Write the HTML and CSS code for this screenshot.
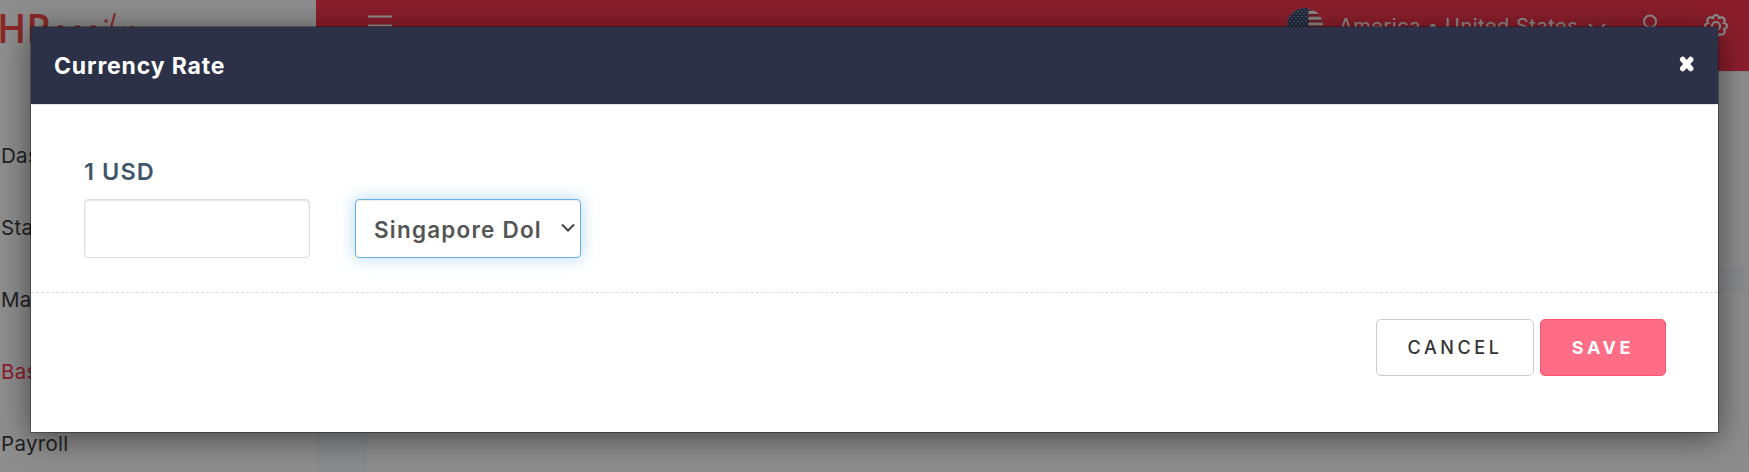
FILE: index.html
```
<!DOCTYPE html>
<html lang="en">
<head>
	<meta charset="UTF-8">
	<title>Currency Rate</title>
	<link rel="stylesheet" href="styles.css">
</head>
<body>
<div class="page">
	<div class="sidebar">
		<div class="logo">
			<b>HR</b>
			<svg width="80" height="40" viewBox="0 0 80 40"><path d="M9 19Q12 16 15 18M26 19Q29 16 32 18M41 19Q45 16 48 18M55 22L57 18M67 4Q64 14 62 24M75 19L76 17.500M83 18L84 17"/><circle cx="58" cy="12" r="1.700"/></svg>
		</div>
		<ul class="menu">
			<li>Dashboard</li>
			<li>Staff</li>
			<li>Manage</li>
			<li class="active">Basic</li>
			<li>Payroll</li>
		</ul>
	</div>
	<div class="main">
		<div class="topbar">
			<svg class="bars" width="24" height="22" viewBox="0 0 24 22"><path d="M0 1.5h24M0 10.5h24M0 19.5h24"/></svg>
			<svg class="flag" width="36" height="36" viewBox="0 0 36 36">
				<defs>
					<clipPath id="round"><circle cx="18" cy="18" r="18"/></clipPath>
					<pattern id="stars" width="4" height="5" patternUnits="userSpaceOnUse"><rect width="4" height="5" fill="#34466c"/><circle cx="1" cy="1" r=".7" fill="#d5dbe8"/><circle cx="3" cy="3.5" r=".7" fill="#d5dbe8"/></pattern>
				</defs>
				<g clip-path="url(#round)">
					<rect width="36" height="36" fill="#f8f0ef"/>
					<path d="M0 1.4h36M0 7.4h36M0 13.2h36M0 19h36M0 24.8h36M0 30.6h36" stroke="#c53445" stroke-width="2.8"/>
					<rect width="21.5" height="19" fill="url(#stars)"/>
				</g>
			</svg>
			<span class="country">America • United States</span>
			<svg class="down" width="18" height="12" viewBox="0 0 18 12"><path d="M1 2l8 8 8-8"/></svg>
			<svg class="user" width="24" height="28" viewBox="0 0 24 28"><circle cx="12" cy="7.500" r="6"/><path d="M2 27q0-10 10-10t10 10"/></svg>
			<svg class="gear" width="24" height="24" viewBox="0 0 24 24"><circle cx="12" cy="12" r="4"/><path d="M9 4C10 0 14 0 15 4C19 2 22 5 20 9C24 10 24 14 20 15C22 19 19 22 15 20C14 24 10 24 9 20C5 22 2 19 4 15C0 14 0 10 4 9C2 5 5 2 9 4Z"/></svg>
		</div>
		<div class="content">
			<div class="card card-top"></div>
			<div class="card"></div>
		</div>
	</div>
</div>

<div class="backdrop">
	<div class="modal">
		<div class="modal-header">
			<h4>Currency Rate</h4>
			<svg class="close" width="16" height="18" viewBox="0 0 16 18"><path d="M3.700 4.500l8 9M11.700 4.500l-8 9"/></svg>
		</div>
		<div class="modal-body">
			<div class="form-group">
				<label for="rate">1 USD</label>
				<input type="text" id="rate" class="form-control">
			</div>
			<div class="form-group select">
				<select class="form-control focus">
					<option>Singapore Dollar</option>
				</select>
				<svg class="arrow" width="14" height="10" viewBox="0 0 14 10"><path d="M1 1.500l6 6 6-6"/></svg>
			</div>
		</div>
		<div class="modal-footer">
			<button class="btn btn-default">CANCEL</button>
			<button class="btn btn-save">SAVE</button>
		</div>
	</div>
</div>
</body>
</html>
```

FILE: styles.css
```
*{box-sizing:border-box;}
body{margin:0; height:472px; overflow:hidden; font-family:Inter,"Liberation Sans",sans-serif;}
ul{margin:0; padding:0; list-style:none;}
svg{display:block; flex:none;}

.page{display:flex; height:472px; overflow:hidden;}
.sidebar{flex:none; width:316px; background:#fdfdff; box-shadow:0 0 14px rgba(0,0,0,.08);}
.logo{display:flex; height:120px; color:#f84848;}
.logo b{font:600 39px/46px "Open Sans",sans-serif; width:51px; padding-top:5px; margin-left:-3px; letter-spacing:0;}
.logo svg{margin-top:9px; fill:none; stroke:#f84848; stroke-width:2; overflow:visible;}
.logo circle{fill:#f84848; stroke:none;}
.menu li{height:70px; margin-bottom:2px; line-height:72px; padding-left:1px; font-size:20.5px; letter-spacing:.3px; color:#3c3c40;}
.menu .active{color:#f8364f;}
.main{flex:1; display:flex; flex-direction:column;}
.topbar{flex:none; display:flex; height:71px; padding:8px 20px 0 52px; background:#f8364f; color:#fff;}
.topbar svg{fill:none; stroke:#fff; stroke-width:2;}
.bars{margin-top:7px;}
.topbar .flag{margin-left:895px; stroke:none;}
.country{margin-left:16px; width:236px; line-height:36px; font-size:20px; letter-spacing:.5px; white-space:nowrap;}
.down{margin:14px 0 0 13px;}
.user{margin:6px 0 0 32px;}
.topbar .gear{margin:6px 0 0 42px; stroke-width:2.2;}
.content{flex:1; display:flex; flex-direction:column; background:#f7f8fc; padding-left:49px;}
.card{flex:1; background:#fbfbfb; border:1px solid #eeeef2; border-bottom:0;}
.card-top{flex:none; height:198px; margin-bottom:20px; border-bottom:1px solid #eeeef2;}

.backdrop{position:absolute; top:0; left:0; width:1749px; height:472px; padding:26px 30px; background:rgba(0,0,0,.44);}
.modal{height:407px; background:#fff; background-clip:padding-box; border:1px solid rgba(0,0,0,.3); box-shadow:0 5px 30px rgba(0,0,0,.5);}
.modal-header{display:flex; justify-content:space-between; height:78px; padding:0 23px; background:#2c3147; border-bottom:1px solid #e5e5e5; color:#fff;}
.modal-header h4{margin:0; font-size:23px; line-height:78px; font-weight:700; letter-spacing:.85px;}
.close{margin-top:28px; fill:none; stroke:#fff; stroke-width:5.5; stroke-linecap:round;}
.modal-body{display:flex; align-items:flex-end; gap:45px; height:188px; padding:0 53px 34px; border-bottom:1px dashed #ddd;}
.form-group label{display:block; margin-bottom:12px; font-size:23.5px; line-height:30px; font-weight:600; color:#3f566d; letter-spacing:1.1px;}
.form-control{display:block; width:226px; height:59px; padding:6px 16px; border:1px solid #ddd; border-radius:4px; background:#fff; box-shadow:inset 0 1px 2px rgba(0,0,0,.12); font:600 22.5px Inter,sans-serif; letter-spacing:1.2px; color:#555;}
.focus{border-color:#66afe9; box-shadow:inset 0 1px 1px rgba(0,0,0,.075),0 0 16px rgba(102,175,233,.5);}
.select{position:relative;}
.select select{appearance:none; padding:8px 37px 6px 18px; outline:0;}
.arrow{position:absolute; right:6px; top:24px; fill:none; stroke:#444; stroke-width:2;}
.modal-footer{display:flex; justify-content:flex-end; gap:6px; padding:26px 52px;}
.btn{height:57px; padding:0; border-radius:5px; font:500 18px Inter,sans-serif; letter-spacing:3.6px;}
.btn-default{width:158px; background:#fff; border:1px solid #ccc; color:#333;}
.btn-save{width:126px; background:#ff6c85; border:1px solid #ff5370; color:#fff; font-weight:700;}
```
